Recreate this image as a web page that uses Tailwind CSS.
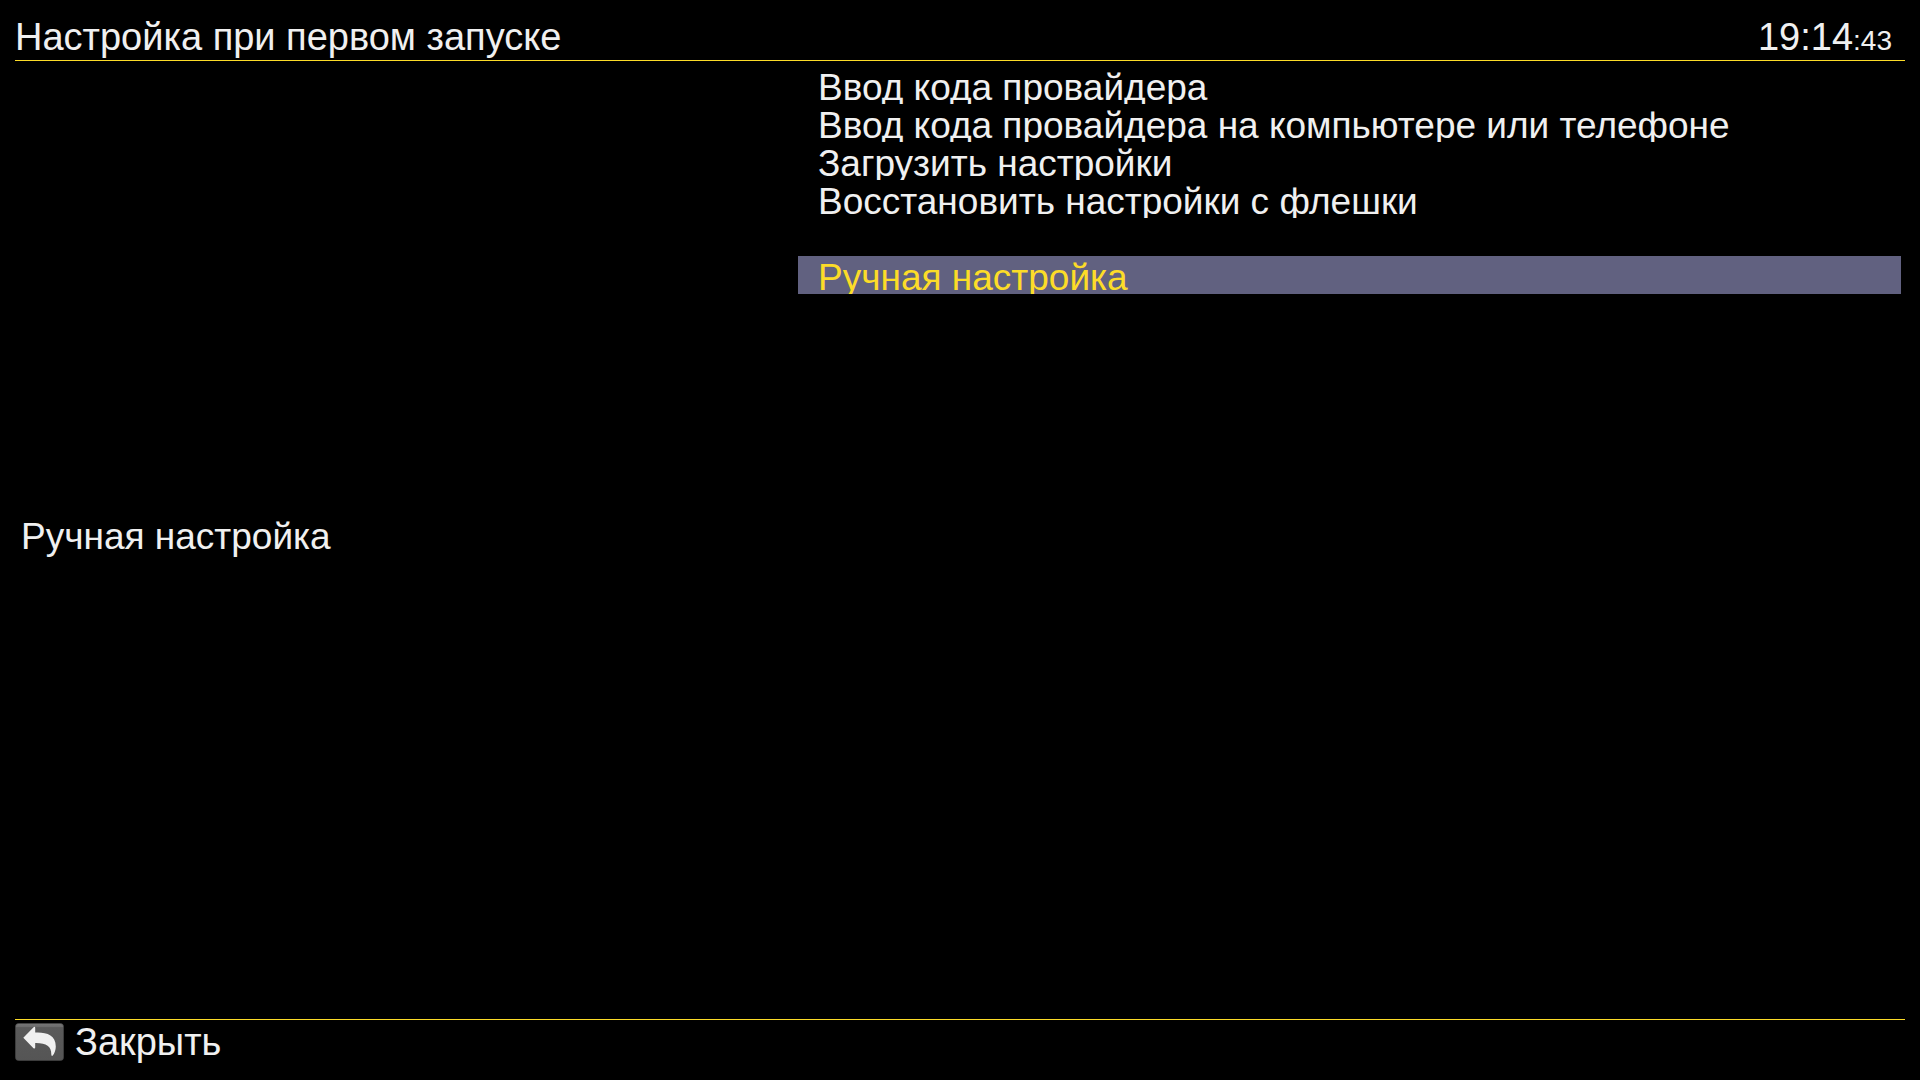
<!DOCTYPE html>
<html lang="ru">
<head>
<meta charset="utf-8">
<title>Настройка при первом запуске</title>
<script src="https://cdn.jsdelivr.net/npm/@tailwindcss/browser@4"></script>
</head>
<body class="flex h-screen flex-col overflow-hidden bg-black px-[15px] font-['Liberation_Sans',Arial,sans-serif] text-[#f0f0f0]">
  <header class="flex h-[61px] shrink-0 items-baseline justify-between border-b border-[#fcdc28] pt-4">
    <h1 class="text-[38px] leading-[42px]">Настройка при первом запуске</h1>
    <time class="pr-[13px] text-[38px] leading-[42px]">19:14<span class="text-[28px] leading-none">:43</span></time>
  </header>
  <main class="flex min-h-0 flex-1">
    <section class="flex w-[783px] shrink-0 items-center pb-1.5 pl-1.5">
      <p class="text-[37px] leading-[42px]">Ручная настройка</p>
    </section>
    <nav class="flex-1 pt-[5px] pr-1">
      <ul class="text-[37px] leading-[44px]">
        <li class="h-[38px] overflow-hidden"><button type="button" class="w-full px-5 text-left">Ввод кода провайдера</button></li>
        <li class="h-[38px] overflow-hidden"><button type="button" class="w-full px-5 text-left">Ввод кода провайдера на компьютере или телефоне</button></li>
        <li class="h-[38px] overflow-hidden"><button type="button" class="w-full px-5 text-left">Загрузить настройки</button></li>
        <li class="h-[38px] overflow-hidden"><button type="button" class="w-full px-5 text-left">Восстановить настройки с флешки</button></li>
        <li class="h-[38px]" role="separator"></li>
        <li class="h-[38px] overflow-hidden bg-[#616180] text-[#fcdc28]"><button type="button" class="w-full px-5 text-left" aria-current="true">Ручная настройка</button></li>
      </ul>
    </nav>
  </main>
  <footer class="h-[61px] shrink-0 border-t border-[#fcdc28] pt-[3px]">
    <button type="button" class="flex items-start gap-[11px] text-[38px] leading-[38px]">
      <svg class="h-[38px] w-[49px]" viewBox="0 0 49 38" aria-hidden="true">
        <defs><linearGradient id="key" x1="0" y1="0" x2="0" y2="1"><stop offset="0" stop-color="#777"/><stop offset=".09" stop-color="#6c6c6c"/><stop offset=".11" stop-color="#5a5a5a"/><stop offset="1" stop-color="#555"/></linearGradient></defs>
        <rect x=".5" y=".5" width="48" height="37" rx="3" fill="url(#key)" stroke="#484848" stroke-width=".6"/>
        <path d="M8.3 14.8 18.6 4.2Q20.2 3.2 20.2 5V9.6C31 9 40.8 12 40.8 23.4C40.8 27 39.5 30.2 37.8 32.6Q36.4 33.6 36.3 31.6C36.5 23 31 19.8 20.2 20V24.4Q20 26.2 18.5 25.2Z" fill="#f0f0f0"/>
      </svg>
      <span>Закрыть</span>
    </button>
  </footer>
</body>
</html>
